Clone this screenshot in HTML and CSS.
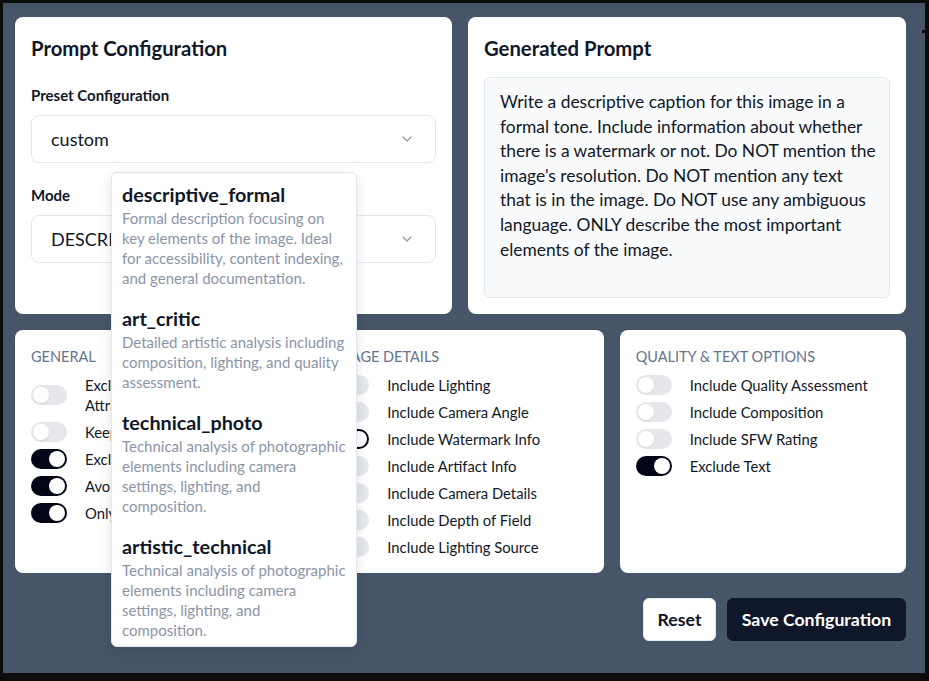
FILE: index.html
```html
<!DOCTYPE html>
<html lang="en">
<head>
<meta charset="utf-8">
<title>Prompt Configuration</title>
<link rel="stylesheet" href="styles.css">
</head>
<body>
<div class="screen">
  <div class="top-row">
    <section class="card config">
      <h2 class="card-title">Prompt Configuration</h2>
      <div class="field">
        <label class="field-label">Preset Configuration</label>
        <div class="select">
          <span>custom</span>
          <svg class="chev" viewBox="0 0 24 24" width="16" height="16"><path d="m6 9 6 6 6-6"/></svg>
        </div>
      </div>
      <div class="field">
        <label class="field-label">Mode</label>
        <div class="select">
          <span>DESCRIPTIVE_FORMAL</span>
          <svg class="chev" viewBox="0 0 24 24" width="16" height="16"><path d="m6 9 6 6 6-6"/></svg>
        </div>
      </div>
    </section>
    <section class="card generated">
      <h2 class="card-title">Generated Prompt</h2>
      <div class="prompt-box">Write a descriptive caption for this image in a formal tone. Include information about whether there is a watermark or not. Do NOT mention the image's resolution. Do NOT mention any text that is in the image. Do NOT use any ambiguous language. ONLY describe the most important elements of the image.</div>
    </section>
  </div>

  <div class="options-row">
    <section class="card opts">
      <h3 class="opts-title">General</h3>
      <ul class="toggles">
        <li><span class="switch"></span><span>Exclude Stable Character Attributes</span></li>
        <li><span class="switch"></span><span>Keep Captions Short</span></li>
        <li><span class="switch on"></span><span>Exclude Image Resolution</span></li>
        <li><span class="switch on"></span><span>Avoid Ambiguous Language</span></li>
        <li><span class="switch on"></span><span>Only Important Elements</span></li>
      </ul>
    </section>
    <section class="card opts">
      <h3 class="opts-title">Image Details</h3>
      <ul class="toggles">
        <li><span class="switch"></span><span>Include Lighting</span></li>
        <li><span class="switch"></span><span>Include Camera Angle</span></li>
        <li><span class="switch on"></span><span>Include Watermark Info</span></li>
        <li><span class="switch"></span><span>Include Artifact Info</span></li>
        <li><span class="switch"></span><span>Include Camera Details</span></li>
        <li><span class="switch"></span><span>Include Depth of Field</span></li>
        <li><span class="switch"></span><span>Include Lighting Source</span></li>
      </ul>
    </section>
    <section class="card opts">
      <h3 class="opts-title">Quality &amp; Text Options</h3>
      <ul class="toggles">
        <li><span class="switch"></span><span>Include Quality Assessment</span></li>
        <li><span class="switch"></span><span>Include Composition</span></li>
        <li><span class="switch"></span><span>Include SFW Rating</span></li>
        <li><span class="switch on"></span><span>Exclude Text</span></li>
      </ul>
    </section>
  </div>

  <div class="actions">
    <button class="btn btn-outline">Reset</button>
    <button class="btn btn-primary">Save Configuration</button>
  </div>

  <div class="menu">
    <div class="menu-item">
      <div class="menu-name">descriptive_formal</div>
      <div class="menu-desc">Formal description focusing on key elements of the image. Ideal for accessibility, content indexing, and general documentation.</div>
    </div>
    <div class="menu-item">
      <div class="menu-name">art_critic</div>
      <div class="menu-desc">Detailed artistic analysis including composition, lighting, and quality assessment.</div>
    </div>
    <div class="menu-item">
      <div class="menu-name">technical_photo</div>
      <div class="menu-desc">Technical analysis of photographic elements including camera settings, lighting, and composition.</div>
    </div>
    <div class="menu-item">
      <div class="menu-name">artistic_technical</div>
      <div class="menu-desc">Technical analysis of photographic elements including camera settings, lighting, and composition.</div>
    </div>
  </div>
  <span class="edge-mark"></span>
</div>
</body>
</html>
```

FILE: styles.css
```css
* { box-sizing: border-box; }
html, body { margin: 0; padding: 0; }
body {
  background: #0c0c0d;
  font-family: "Lato", "Noto Sans", sans-serif;
  color: #0f172a;
  width: 929px;
  height: 681px;
  overflow: hidden;
}
.screen {
  position: relative;
  margin: 3px 4px 0 3px;
  width: 922px;
  height: 670px;
  background: #475569;
  padding: 14px 19px 0 12px;
}
.top-row {
  display: grid;
  grid-template-columns: 437px 438px;
  gap: 16px;
  height: 296px;
}
.card {
  background: #fff;
  border-radius: 8px;
  padding: 17px 16px 16px;
}
.card-title {
  margin: 0;
  font-size: 20.3px;
  line-height: 28px;
  font-weight: 700;
  color: #0f172a;
}
.config .card-title { margin-bottom: 23px; }
.field { display: flex; flex-direction: column; }
.field + .field { margin-top: 22px; }
.field-label {
  font-size: 15px;
  line-height: 20px;
  font-weight: 700;
  margin-bottom: 10px;
  color: #0f172a;
}
.select {
  height: 48px;
  border: 1px solid #e2e8f0;
  border-radius: 8px;
  display: flex;
  align-items: center;
  justify-content: space-between;
  padding: 0 20px 0 19px;
  font-size: 18px;
  color: #0f172a;
}
.chev {
  fill: none;
  stroke: #8a94a3;
  stroke-width: 1.8;
  stroke-linecap: round;
  stroke-linejoin: round;
}
.generated .card-title { margin-bottom: 15px; }
.prompt-box {
  height: 221px;
  background: #f8fafc;
  border: 1px solid #e2e8f0;
  border-radius: 6px;
  padding: 12px 12px 12px 15px;
  font-size: 17.4px;
  line-height: 24.6px;
  color: #111827;
}
.options-row {
  margin-top: 17px;
  display: grid;
  grid-template-columns: repeat(3, 1fr);
  gap: 16px;
  height: 243px;
}
.opts-title {
  margin: 0 0 8px;
  font-size: 14.5px;
  line-height: 20px;
  font-weight: 400;
  text-transform: uppercase;
  color: #64748b;
}
.toggles {
  list-style: none;
  margin: 0;
  padding: 0;
  display: flex;
  flex-direction: column;
  gap: 7px;
}
.toggles li {
  display: flex;
  align-items: center;
  gap: 18px;
  font-size: 14.8px;
  line-height: 20px;
  color: #111827;
}
.switch {
  flex: none;
  position: relative;
  width: 36px;
  height: 20px;
  border-radius: 10px;
  background: #e5e7eb;
}
.switch::after {
  content: "";
  position: absolute;
  top: 2px;
  left: 2px;
  width: 16px;
  height: 16px;
  border-radius: 50%;
  background: #fff;
  box-shadow: 0 1px 2px rgba(0,0,0,0.08);
}
.switch.on { background: #020617; }
.switch.on::after { left: 18px; }
.actions {
  margin-top: 25px;
  display: flex;
  justify-content: flex-end;
  gap: 11px;
}
.btn {
  height: 43px;
  border-radius: 6px;
  font-family: inherit;
  font-size: 17.7px;
  font-weight: 700;
  padding: 0 10px;
  border: 1px solid #e2e8f0;
  cursor: pointer;
}
.btn-outline { background: #fff; color: #0f172a; width: 73px; }
.btn-primary { background: #0f172a; color: #fff; border-color: #0f172a; width: 179px; }
.menu {
  position: absolute;
  left: 108px;
  top: 169px;
  width: 246px;
  background: #fff;
  border: 1px solid #e2e8f0;
  border-radius: 6px;
  box-shadow: 0 4px 12px rgba(15, 23, 42, 0.12);
  padding: 7px 10px 6px 10px;
  display: flex;
  flex-direction: column;
  gap: 16px;
}
.menu-name {
  font-size: 19.8px;
  line-height: 28px;
  font-weight: 700;
  color: #0f172a;
}
.menu-desc {
  font-size: 15px;
  line-height: 20px;
  color: #8b95a7;
}
.edge-mark {
  position: absolute;
  right: -1px;
  top: 27px;
  width: 4px;
  height: 3px;
  background: #0c0c0d;
}
```
